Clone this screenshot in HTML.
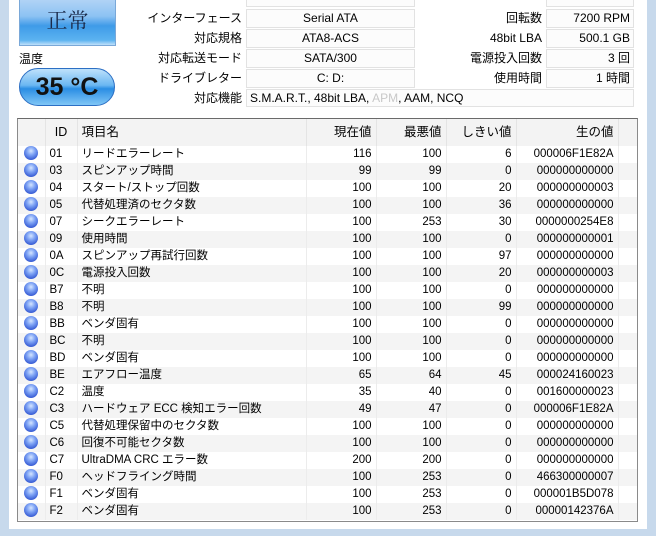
<!DOCTYPE html>
<html><head><meta charset="utf-8"><style>
*{margin:0;padding:0;box-sizing:border-box}
body{width:656px;height:536px;overflow:hidden;background:#fff;position:relative;font-family:"Liberation Sans","Noto Sans CJK JP",sans-serif;font-size:12px;color:#000}
.abs{position:absolute}
.lbl{position:absolute;text-align:right;white-space:nowrap}
.box{position:absolute;border:1px solid #e2e2e2;background:#fcfcfc;text-align:center;line-height:17px;white-space:nowrap;overflow:hidden}
table{border-collapse:collapse;position:absolute;left:18px;top:119px;width:619px;table-layout:fixed}
td{height:17px;padding:0 4px;white-space:nowrap;overflow:hidden;font-size:11.5px;line-height:17px;border-right:1px solid #ececec;vertical-align:middle}
tr:nth-child(odd) td{background:#f4f4f4}
tr.h td{height:27px;background:#f3f3f3;font-size:12.5px;border-right:1px solid #e4e4e4}
.r{text-align:right}
.dot{display:block;position:relative;top:-2px;width:14px;height:14px;border-radius:50%;background:radial-gradient(circle at 50% 35%,#d6e6ff 0,#7fa4f5 35%,#3a5fd6 75%,#2a46b0 100%);margin:0 auto}
</style></head><body>
<div class="abs" style="left:0;top:0;width:9px;height:536px;background:#c7d9ec"></div>
<div class="abs" style="left:647px;top:0;width:9px;height:536px;background:#c7d9ec"></div>
<div class="abs" style="left:0;top:529px;width:656px;height:7px;background:#c7d9ec"></div>

<div class="abs" style="left:19px;top:-4px;width:97px;height:50px;border:1px solid #7aa8d8;background:linear-gradient(#b7d6f6 0,#8cc2f3 40%,#3f9be8 60%,#5cb3f0 90%,#bfe0fa 100%);text-align:center;font-size:21px;line-height:46px;color:#1a2a4a;font-family:'Noto Serif CJK SC',serif">正常</div>
<div class="lbl" style="left:19px;top:50px;font-size:12px">温度</div>
<div class="abs" style="left:19px;top:68px;width:96px;height:38px;border-radius:19px;border:1px solid #2c6fc4;background:linear-gradient(#bfe1fb,#6bb7f2 45%,#2b8ee4 55%,#7fc6f6 100%);text-align:center;font-size:25px;font-weight:bold;line-height:37px;color:#111">35 °C</div>

<div class="lbl" style="right:414px;top:9px">インターフェース</div>
<div class="lbl" style="right:414px;top:29px">対応規格</div>
<div class="lbl" style="right:414px;top:49px">対応転送モード</div>
<div class="lbl" style="right:414px;top:69px">ドライブレター</div>
<div class="lbl" style="right:414px;top:89px">対応機能</div>
<div class="box" style="left:246px;top:-10px;width:169px;height:17px"></div>
<div class="box" style="left:246px;top:9px;width:169px;height:19px">Serial ATA</div>
<div class="box" style="left:246px;top:29px;width:169px;height:19px">ATA8-ACS</div>
<div class="box" style="left:246px;top:49px;width:169px;height:19px">SATA/300</div>
<div class="box" style="left:246px;top:69px;width:169px;height:19px">C: D:</div>
<div class="box" style="left:246px;top:89px;width:388px;height:18px;text-align:left;padding-left:3px">S.M.A.R.T., 48bit LBA, <span style="color:#c8c8c8">APM</span>, AAM, NCQ</div>

<div class="lbl" style="right:114px;top:9px">回転数</div>
<div class="lbl" style="right:114px;top:31px">48bit LBA</div>
<div class="lbl" style="right:114px;top:49px">電源投入回数</div>
<div class="lbl" style="right:114px;top:69px">使用時間</div>
<div class="box" style="left:546px;top:-10px;width:88px;height:17px"></div>
<div class="box" style="left:546px;top:9px;width:88px;height:19px;text-align:right;padding-right:3px">7200 RPM</div>
<div class="box" style="left:546px;top:29px;width:88px;height:19px;text-align:right;padding-right:3px">500.1 GB</div>
<div class="box" style="left:546px;top:49px;width:88px;height:19px;text-align:right;padding-right:3px">3 回</div>
<div class="box" style="left:546px;top:69px;width:88px;height:19px;text-align:right;padding-right:3px">1 時間</div>

<div class="abs" style="left:17px;top:118px;width:621px;height:404px;border:1px solid #8a8a8a;border-top-color:#6a6a6a"></div>
<table>
<colgroup><col style="width:27px"><col style="width:32px"><col style="width:229px"><col style="width:70px"><col style="width:70px"><col style="width:70px"><col style="width:102px"><col></colgroup>
<tr class="h"><td></td><td style="text-align:center">ID</td><td>項目名</td><td class="r">現在値</td><td class="r">最悪値</td><td class="r">しきい値</td><td class="r">生の値</td><td style="border:none"></td></tr>
<tr><td><div class="dot"></div></td><td>01</td><td>リードエラーレート</td><td class="r">116</td><td class="r">100</td><td class="r">6</td><td class="r">000006F1E82A</td><td style="border:none"></td></tr>
<tr><td><div class="dot"></div></td><td>03</td><td>スピンアップ時間</td><td class="r">99</td><td class="r">99</td><td class="r">0</td><td class="r">000000000000</td><td style="border:none"></td></tr>
<tr><td><div class="dot"></div></td><td>04</td><td>スタート/ストップ回数</td><td class="r">100</td><td class="r">100</td><td class="r">20</td><td class="r">000000000003</td><td style="border:none"></td></tr>
<tr><td><div class="dot"></div></td><td>05</td><td>代替処理済のセクタ数</td><td class="r">100</td><td class="r">100</td><td class="r">36</td><td class="r">000000000000</td><td style="border:none"></td></tr>
<tr><td><div class="dot"></div></td><td>07</td><td>シークエラーレート</td><td class="r">100</td><td class="r">253</td><td class="r">30</td><td class="r">0000000254E8</td><td style="border:none"></td></tr>
<tr><td><div class="dot"></div></td><td>09</td><td>使用時間</td><td class="r">100</td><td class="r">100</td><td class="r">0</td><td class="r">000000000001</td><td style="border:none"></td></tr>
<tr><td><div class="dot"></div></td><td>0A</td><td>スピンアップ再試行回数</td><td class="r">100</td><td class="r">100</td><td class="r">97</td><td class="r">000000000000</td><td style="border:none"></td></tr>
<tr><td><div class="dot"></div></td><td>0C</td><td>電源投入回数</td><td class="r">100</td><td class="r">100</td><td class="r">20</td><td class="r">000000000003</td><td style="border:none"></td></tr>
<tr><td><div class="dot"></div></td><td>B7</td><td>不明</td><td class="r">100</td><td class="r">100</td><td class="r">0</td><td class="r">000000000000</td><td style="border:none"></td></tr>
<tr><td><div class="dot"></div></td><td>B8</td><td>不明</td><td class="r">100</td><td class="r">100</td><td class="r">99</td><td class="r">000000000000</td><td style="border:none"></td></tr>
<tr><td><div class="dot"></div></td><td>BB</td><td>ベンダ固有</td><td class="r">100</td><td class="r">100</td><td class="r">0</td><td class="r">000000000000</td><td style="border:none"></td></tr>
<tr><td><div class="dot"></div></td><td>BC</td><td>不明</td><td class="r">100</td><td class="r">100</td><td class="r">0</td><td class="r">000000000000</td><td style="border:none"></td></tr>
<tr><td><div class="dot"></div></td><td>BD</td><td>ベンダ固有</td><td class="r">100</td><td class="r">100</td><td class="r">0</td><td class="r">000000000000</td><td style="border:none"></td></tr>
<tr><td><div class="dot"></div></td><td>BE</td><td>エアフロー温度</td><td class="r">65</td><td class="r">64</td><td class="r">45</td><td class="r">000024160023</td><td style="border:none"></td></tr>
<tr><td><div class="dot"></div></td><td>C2</td><td>温度</td><td class="r">35</td><td class="r">40</td><td class="r">0</td><td class="r">001600000023</td><td style="border:none"></td></tr>
<tr><td><div class="dot"></div></td><td>C3</td><td>ハードウェア ECC 検知エラー回数</td><td class="r">49</td><td class="r">47</td><td class="r">0</td><td class="r">000006F1E82A</td><td style="border:none"></td></tr>
<tr><td><div class="dot"></div></td><td>C5</td><td>代替処理保留中のセクタ数</td><td class="r">100</td><td class="r">100</td><td class="r">0</td><td class="r">000000000000</td><td style="border:none"></td></tr>
<tr><td><div class="dot"></div></td><td>C6</td><td>回復不可能セクタ数</td><td class="r">100</td><td class="r">100</td><td class="r">0</td><td class="r">000000000000</td><td style="border:none"></td></tr>
<tr><td><div class="dot"></div></td><td>C7</td><td>UltraDMA CRC エラー数</td><td class="r">200</td><td class="r">200</td><td class="r">0</td><td class="r">000000000000</td><td style="border:none"></td></tr>
<tr><td><div class="dot"></div></td><td>F0</td><td>ヘッドフライング時間</td><td class="r">100</td><td class="r">253</td><td class="r">0</td><td class="r">466300000007</td><td style="border:none"></td></tr>
<tr><td><div class="dot"></div></td><td>F1</td><td>ベンダ固有</td><td class="r">100</td><td class="r">253</td><td class="r">0</td><td class="r">000001B5D078</td><td style="border:none"></td></tr>
<tr><td><div class="dot"></div></td><td>F2</td><td>ベンダ固有</td><td class="r">100</td><td class="r">253</td><td class="r">0</td><td class="r">00000142376A</td><td style="border:none"></td></tr>
</table>
</body></html>
